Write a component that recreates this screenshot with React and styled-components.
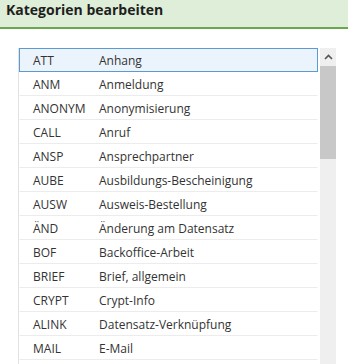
import React from "react";
import styled, { createGlobalStyle } from "styled-components";

const GlobalStyle = createGlobalStyle`
  body {
    margin: 0;
    background: #fff;
    font-family: "Open Sans", "Liberation Sans", sans-serif;
    overflow: hidden;
  }
`;

const categories = [
  ["ATT", "Anhang"],
  ["ANM", "Anmeldung"],
  ["ANONYM", "Anonymisierung"],
  ["CALL", "Anruf"],
  ["ANSP", "Ansprechpartner"],
  ["AUBE", "Ausbildungs-Bescheinigung"],
  ["AUSW", "Ausweis-Bestellung"],
  ["ÄND", "Änderung am Datensatz"],
  ["BOF", "Backoffice-Arbeit"],
  ["BRIEF", "Brief, allgemein"],
  ["CRYPT", "Crypt-Info"],
  ["ALINK", "Datensatz-Verknüpfung"],
  ["MAIL", "E-Mail"],
];

const Page = styled.div`
  width: 348px;
  height: 364px;
  overflow: hidden;
`;

const Header = styled.div`
  height: 27px;
  box-sizing: border-box;
  background: #dfeed8;
  border-bottom: 2px solid #6aa84f;
  padding: 3px 0 0 6px;
  font-size: 14px;
  line-height: 14px;
  font-weight: 700;
  color: #1e1e1e;
  height: 29px;
`;

const Body = styled.div`
  padding: 19px 0 0 18px;
  display: flex;
`;

const ListBox = styled.div`
  display: flex;
  border-left: 1px solid #e2e2e2;
  height: 400px;
`;

const Rows = styled.div`
  width: 299px;
  display: flex;
  flex-direction: column;
`;

const Row = styled.div`
  height: 24px;
  box-sizing: border-box;
  display: flex;
  align-items: center;
  font-size: 12px;
  color: #333;
  border: 1px solid ${(p) => (p.$active ? "#5c9ad2" : "transparent")};
  border-bottom: 1px solid ${(p) => (p.$active ? "#5c9ad2" : "#ececec")};
  background: ${(p) => (p.$active ? "#ebf4fd" : "#fff")};
  padding-left: 13px;
`;

const Code = styled.span`
  width: 66px;
`;

const Scrollbar = styled.div`
  width: 16px;
  margin-left: 2px;
  background: #efefef;
  display: flex;
  flex-direction: column;
`;

const Arrow = styled.div`
  height: 18px;
  display: flex;
  align-items: center;
  justify-content: center;
`;

const Thumb = styled.div`
  height: 93px;
  background: #c8c8c8;
`;

function Categories() {
  return (
    <Page>
      <Header>Kategorien bearbeiten</Header>
      <Body>
        <ListBox>
          <Rows>
            {categories.map(([code, label], i) => (
              <Row key={code} $active={i === 0}>
                <Code>{code}</Code>
                <span>{label}</span>
              </Row>
            ))}
          </Rows>
          <Scrollbar>
            <Arrow>
              <svg width="9" height="6" viewBox="0 0 9 6">
                <path d="M1 5 L4.5 1.5 L8 5" stroke="#555" strokeWidth="1.6" fill="none" />
              </svg>
            </Arrow>
            <Thumb />
          </Scrollbar>
        </ListBox>
      </Body>
    </Page>
  );
}

export default function App() {
  return (
    <>
      <GlobalStyle />
      <Categories />
    </>
  );
}
